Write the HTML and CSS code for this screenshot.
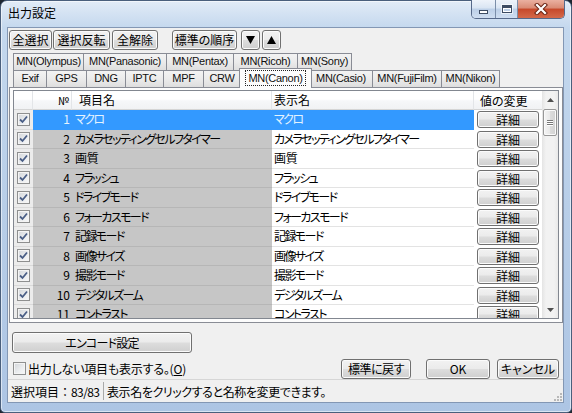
FILE: index.html
```html
<!DOCTYPE html>
<html lang="ja">
<head>
<meta charset="utf-8">
<title>出力設定</title>
<link rel="stylesheet" href="styles.css">
</head>
<body>
<div class="window">
  <div class="titlebar">
    <div class="title">出力設定</div>
    <div class="caption">
      <div class="cap cap-min"><span class="ico-min"></span></div>
      <div class="cap cap-max"><span class="ico-max"></span></div>
      <div class="cap cap-close">
        <svg width="14" height="12" viewBox="0 0 14 12"><path d="M3 2 L11 10 M11 2 L3 10" stroke="#6b2414" stroke-width="4.2" stroke-linecap="square"/><path d="M3 2 L11 10 M11 2 L3 10" stroke="#ffffff" stroke-width="2.2" stroke-linecap="square"/></svg>
      </div>
    </div>
  </div>
  <div class="client">
    <div class="toolbar">
      <button class="btn tb-all">全選択</button>
      <button class="btn tb-inv">選択反転</button>
      <button class="btn tb-none">全解除</button>
      <button class="btn tb-std">標準の順序</button>
      <button class="btn tb-down"><svg width="9" height="8" viewBox="0 0 9 8"><path d="M0 0 H9 L4.5 8 Z" fill="#000"/></svg></button>
      <button class="btn tb-up"><svg width="9" height="8" viewBox="0 0 9 8"><path d="M0 8 H9 L4.5 0 Z" fill="#000"/></svg></button>
    </div>
    <div class="tabs">
      <div class="tabrow">
        <div class="tab first t-olympus">MN(Olympus)</div>
        <div class="tab t-panasonic">MN(Panasonic)</div>
        <div class="tab t-pentax">MN(Pentax)</div>
        <div class="tab t-ricoh">MN(Ricoh)</div>
        <div class="tab t-sony">MN(Sony)</div>
      </div>
      <div class="tabrow">
        <div class="tab first t-exif">Exif</div>
        <div class="tab t-gps">GPS</div>
        <div class="tab t-dng">DNG</div>
        <div class="tab t-iptc">IPTC</div>
        <div class="tab t-mpf">MPF</div>
        <div class="tab t-crw">CRW</div>
        <div class="tab t-canon selected"><span class="focus">MN(Canon)</span></div>
        <div class="tab t-casio">MN(Casio)</div>
        <div class="tab t-fuji">MN(FujiFilm)</div>
        <div class="tab t-nikon">MN(Nikon)</div>
      </div>
    </div>
    <div class="panel">
      <div class="list">
        <div class="list-main">
          <div class="row head">
            <div class="c c-chk"></div>
            <div class="c c-no">№</div>
            <div class="c c-item">項目名</div>
            <div class="c c-disp">表示名</div>
            <div class="c c-act">値の変更</div>
          </div>
          <div class="row sel">
            <div class="c c-chk"><span class="cbox on"><svg width="9" height="9" viewBox="0 0 9 9"><path d="M1 4.5 L3.5 7 L8 1.5" fill="none" stroke="#4a5e86" stroke-width="1.8"/></svg></span></div>
            <div class="c c-no">1</div>
            <div class="c c-item">マクロ</div>
            <div class="c c-disp">マクロ</div>
            <div class="c c-act"><button class="btn detail">詳細</button></div>
          </div>
          <div class="row">
            <div class="c c-chk"><span class="cbox on"><svg width="9" height="9" viewBox="0 0 9 9"><path d="M1 4.5 L3.5 7 L8 1.5" fill="none" stroke="#4a5e86" stroke-width="1.8"/></svg></span></div>
            <div class="c c-no">2</div>
            <div class="c c-item">カメラセッティングセルフタイマー</div>
            <div class="c c-disp">カメラセッティングセルフタイマー</div>
            <div class="c c-act"><button class="btn detail">詳細</button></div>
          </div>
          <div class="row">
            <div class="c c-chk"><span class="cbox on"><svg width="9" height="9" viewBox="0 0 9 9"><path d="M1 4.5 L3.5 7 L8 1.5" fill="none" stroke="#4a5e86" stroke-width="1.8"/></svg></span></div>
            <div class="c c-no">3</div>
            <div class="c c-item kanji">画質</div>
            <div class="c c-disp kanji">画質</div>
            <div class="c c-act"><button class="btn detail">詳細</button></div>
          </div>
          <div class="row">
            <div class="c c-chk"><span class="cbox on"><svg width="9" height="9" viewBox="0 0 9 9"><path d="M1 4.5 L3.5 7 L8 1.5" fill="none" stroke="#4a5e86" stroke-width="1.8"/></svg></span></div>
            <div class="c c-no">4</div>
            <div class="c c-item">フラッシュ</div>
            <div class="c c-disp">フラッシュ</div>
            <div class="c c-act"><button class="btn detail">詳細</button></div>
          </div>
          <div class="row">
            <div class="c c-chk"><span class="cbox on"><svg width="9" height="9" viewBox="0 0 9 9"><path d="M1 4.5 L3.5 7 L8 1.5" fill="none" stroke="#4a5e86" stroke-width="1.8"/></svg></span></div>
            <div class="c c-no">5</div>
            <div class="c c-item">ドライブモード</div>
            <div class="c c-disp">ドライブモード</div>
            <div class="c c-act"><button class="btn detail">詳細</button></div>
          </div>
          <div class="row">
            <div class="c c-chk"><span class="cbox on"><svg width="9" height="9" viewBox="0 0 9 9"><path d="M1 4.5 L3.5 7 L8 1.5" fill="none" stroke="#4a5e86" stroke-width="1.8"/></svg></span></div>
            <div class="c c-no">6</div>
            <div class="c c-item">フォーカスモード</div>
            <div class="c c-disp">フォーカスモード</div>
            <div class="c c-act"><button class="btn detail">詳細</button></div>
          </div>
          <div class="row">
            <div class="c c-chk"><span class="cbox on"><svg width="9" height="9" viewBox="0 0 9 9"><path d="M1 4.5 L3.5 7 L8 1.5" fill="none" stroke="#4a5e86" stroke-width="1.8"/></svg></span></div>
            <div class="c c-no">7</div>
            <div class="c c-item">記録モード</div>
            <div class="c c-disp">記録モード</div>
            <div class="c c-act"><button class="btn detail">詳細</button></div>
          </div>
          <div class="row">
            <div class="c c-chk"><span class="cbox on"><svg width="9" height="9" viewBox="0 0 9 9"><path d="M1 4.5 L3.5 7 L8 1.5" fill="none" stroke="#4a5e86" stroke-width="1.8"/></svg></span></div>
            <div class="c c-no">8</div>
            <div class="c c-item">画像サイズ</div>
            <div class="c c-disp">画像サイズ</div>
            <div class="c c-act"><button class="btn detail">詳細</button></div>
          </div>
          <div class="row">
            <div class="c c-chk"><span class="cbox on"><svg width="9" height="9" viewBox="0 0 9 9"><path d="M1 4.5 L3.5 7 L8 1.5" fill="none" stroke="#4a5e86" stroke-width="1.8"/></svg></span></div>
            <div class="c c-no">9</div>
            <div class="c c-item">撮影モード</div>
            <div class="c c-disp">撮影モード</div>
            <div class="c c-act"><button class="btn detail">詳細</button></div>
          </div>
          <div class="row">
            <div class="c c-chk"><span class="cbox on"><svg width="9" height="9" viewBox="0 0 9 9"><path d="M1 4.5 L3.5 7 L8 1.5" fill="none" stroke="#4a5e86" stroke-width="1.8"/></svg></span></div>
            <div class="c c-no">10</div>
            <div class="c c-item">デジタルズーム</div>
            <div class="c c-disp">デジタルズーム</div>
            <div class="c c-act"><button class="btn detail">詳細</button></div>
          </div>
          <div class="row">
            <div class="c c-chk"><span class="cbox on"><svg width="9" height="9" viewBox="0 0 9 9"><path d="M1 4.5 L3.5 7 L8 1.5" fill="none" stroke="#4a5e86" stroke-width="1.8"/></svg></span></div>
            <div class="c c-no">11</div>
            <div class="c c-item">コントラスト</div>
            <div class="c c-disp">コントラスト</div>
            <div class="c c-act"><button class="btn detail">詳細</button></div>
          </div>
        </div>
        <div class="vscroll">
          <div class="sb-btn"><svg width="7" height="4" viewBox="0 0 7 4"><path d="M0 4 H7 L3.5 0 Z" fill="#505050"/></svg></div>
          <div class="sb-track">
            <div class="sb-thumb"><span class="grip-line"></span><span class="grip-line"></span><span class="grip-line"></span></div>
          </div>
          <div class="sb-btn"><svg width="7" height="4" viewBox="0 0 7 4"><path d="M0 0 H7 L3.5 4 Z" fill="#505050"/></svg></div>
        </div>
      </div>
    </div>
    <button class="btn encode">エンコード設定</button>
    <div class="bottom">
      <label class="chk-label"><span class="cbox"></span><span>出力しない項目も表示する。(<u>O</u>)</span></label>
      <div class="actions">
        <button class="btn b-reset">標準に戻す</button>
        <button class="btn b-ok">OK</button>
        <button class="btn b-cancel">キャンセル</button>
      </div>
    </div>
    <div class="status">
      <div class="st-count">選択項目<span class="colon">：</span><span class="num">83/83</span></div>
      <div class="st-msg">表示名をクリックすると名称を変更できます。</div>
      <svg class="grip" width="9" height="9" viewBox="0 0 9 9">
        <rect x="7" y="1" width="2" height="2" fill="#b8b8b8"/>
        <rect x="4" y="4" width="2" height="2" fill="#b8b8b8"/>
        <rect x="7" y="4" width="2" height="2" fill="#b8b8b8"/>
        <rect x="1" y="7" width="2" height="2" fill="#b8b8b8"/>
        <rect x="4" y="7" width="2" height="2" fill="#b8b8b8"/>
        <rect x="7" y="7" width="2" height="2" fill="#b8b8b8"/>
      </svg>
    </div>
  </div>
</div>
</body>
</html>
```

FILE: styles.css
```css
* { box-sizing: border-box; }
html, body { margin: 0; padding: 0; }
body {
  width: 572px;
  height: 413px;
  overflow: hidden;
  background: #1e2630;
  font-family: "Noto Sans CJK JP", "Noto Sans", sans-serif;
  font-size: 12px;
  color: #000;
  font-feature-settings: "palt" 1;
}

.window {
  width: 572px;
  height: 413px;
  border: 1px solid #4a5f7c;
  border-radius: 7px 7px 5px 5px;
  background: linear-gradient(180deg, #e2ecf7 0, #d2e1f2 14px, #c4d8ee 27px, #b8cee8 50%, #adc5e4 100%);
  box-shadow: inset 0 0 0 1px rgba(255, 255, 255, 0.55);
  display: flex;
  flex-direction: column;
  padding: 0 7px 9px 6px;
}

/* title bar */
.titlebar {
  height: 26px;
  flex: none;
  display: flex;
  align-items: flex-start;
}
.title {
  margin-top: 4px;
  margin-left: 1px;
  line-height: 16px;
  font-size: 12px;
}
.caption {
  margin-left: auto;
  margin-right: -1px;
  margin-top: -1px;
  height: 19px;
  display: flex;
  border: 1px solid #56698a;
  border-top: 0;
  border-radius: 0 0 5px 5px;
  overflow: hidden;
}
.cap {
  height: 100%;
  display: flex;
  align-items: center;
  justify-content: center;
}
.cap-min, .cap-max {
  background: linear-gradient(180deg, #eef3fa 0%, #d9e5f3 45%, #bccfe7 50%, #cfdef1 100%);
  border-right: 1px solid #7b8ea9;
}
.cap-min { width: 24px; }
.cap-max { width: 22px; }
.cap-close {
  width: 46px;
  background: linear-gradient(180deg, #eab0a0 0%, #d98a74 45%, #c6482a 50%, #d4694a 100%);
}
.ico-min {
  width: 9px;
  height: 4px;
  margin-top: 6px;
  background: #fff;
  border: 1px solid #3d4c63;
}
.ico-max {
  width: 10px;
  height: 8px;
  border: 1px solid #3d4c63;
  border-top-width: 3px;
  background: transparent;
  box-shadow: inset 0 0 0 1px #fff, 0 0 0 1px rgba(255,255,255,.6);
}

/* client area */
.client {
  flex: 1;
  background: #f0f0f0;
  border: 1px solid #8397b4;
  display: flex;
  flex-direction: column;
}

.btn {
  font: inherit;
  font-feature-settings: "palt" 1;
  color: #000;
  padding: 0;
  margin: 0;
  border: 1px solid #707070;
  border-radius: 3px;
  background: linear-gradient(180deg, #f2f2f2 0%, #ebebeb 48%, #dddddd 52%, #cfcfcf 100%);
  box-shadow: inset 0 0 0 1px #fbfbfb;
  display: flex;
  align-items: center;
  justify-content: center;
  line-height: 16px;
  white-space: nowrap;
}

/* toolbar */
.toolbar {
  display: flex;
  height: 20px;
  margin-top: 2px;
  flex: none;
}
.toolbar .btn { height: 20px; }
.tb-all { margin-left: 1px; width: 43px; }
.tb-inv { margin-left: 1px; width: 57px; }
.tb-none { margin-left: 2px; width: 46px; }
.tb-std { margin-left: 14px; width: 65px; }
.tb-down { margin-left: 4px; width: 19px; }
.tb-up { margin-left: 2px; width: 19px; }

/* tabs */
.tabs {
  margin-top: 3px;
  padding-left: 5px;
  height: 34px;
  flex: none;
  display: flex;
  flex-direction: column;
}
.tabrow {
  display: flex;
  height: 17px;
}
.tab {
  height: 17px;
  border: 1px solid #898c95;
  border-left: 0;
  border-bottom: 0;
  background: linear-gradient(180deg, #f3f3f3 0%, #ebebeb 50%, #dedede 100%);
  text-align: center;
  font-family: "Liberation Sans", "Noto Sans CJK JP", sans-serif;
  font-size: 11px;
  letter-spacing: -0.3px;
  line-height: 15px;
  white-space: nowrap;
  overflow: visible;
  color: #111;
}
.tab.first { border-left: 1px solid #898c95; }
.tab.selected {
  position: relative;
  z-index: 2;
  top: -2px;
  height: 20px;
  margin: 0 -2px;
  border-left: 1px solid #898c95;
  background: #fcfcfc;
  padding-top: 2px;
}
.focus {
  display: inline-block;
  outline: 1px dotted #222;
  outline-offset: 0;
  padding: 0 2px;
  line-height: 14px;
}
.t-olympus { width: 71px; }
.t-panasonic { width: 83px; }
.t-pentax { width: 67px; }
.t-ricoh { width: 64px; }
.t-sony { width: 54px; }
.t-exif { width: 34px; }
.t-gps { width: 40px; }
.t-dng { width: 39px; }
.t-iptc { width: 38px; }
.t-mpf { width: 40px; }
.t-crw { width: 37px; }
.t-canon { width: 73px; }
.t-casio { width: 63px; }
.t-fuji { width: 69px; }
.t-nikon { width: 58px; }

/* panel */
.panel {
  flex: none;
  height: 236px;
  margin-left: 1px;
  border: 1px solid #898c95;
  background: #fcfcfc;
  padding: 2px 3px 3px 3px;
}
.list {
  height: 229px;
  border: 1px solid #828790;
  background: #fff;
  display: flex;
  overflow: hidden;
}
.list-main {
  width: 528px;
  overflow: hidden;
}
.row {
  display: grid;
  grid-template-columns: 19px 39px 200px 202px 68px;
  height: 19.5px;
}
.c {
  white-space: nowrap;
  overflow: hidden;
  line-height: 18px;
  border-bottom: 1px solid #e3e3e3;
}
.row.head {
  height: 19px;
}
.head .c {
  background: linear-gradient(180deg, #ffffff 0%, #ffffff 45%, #f6f7f9 55%, #f1f2f4 100%);
  border-bottom: 1px solid #d5d5d5;
  border-right: 1px solid #e3e5e8;
  line-height: 18px;
  letter-spacing: 0;
}
.head .c-no { padding-left: 6px; font-size: 11px; }
.head .c-item { padding-left: 7px; }
.head .c-disp { padding-left: 2px; }
.head .c-act { padding-left: 6px; border-right: 0; }

.c-chk {
  background: #ececec;
  border-bottom-color: #dadada;
  display: flex;
  align-items: center;
  justify-content: center;
}
.c-no {
  background: #c6c6c6;
  border-bottom-color: #b6b6b6;
  text-align: right;
  padding-right: 2px;
}
.c-item {
  background: #c6c6c6;
  border-bottom-color: #b6b6b6;
  padding-left: 3px;
  letter-spacing: -1.6px;
}
.c-disp {
  padding-left: 2px;
  letter-spacing: -1.6px;
}
.c-item.kanji, .c-disp.kanji { letter-spacing: -0.3px; }
.c-act {
  padding: 1px 3px 1px 3px;
  border-bottom: 0;
}
.sel .c-no, .sel .c-item, .sel .c-disp {
  background: #3399ff;
  color: #e4f3ff;
  border-bottom-color: #3399ff;
}
.btn.detail {
  width: 62px;
  height: 17px;
  line-height: 15px;
}

.cbox {
  width: 13px;
  height: 13px;
  flex: none;
  border: 1px solid #8e8f8f;
  background: linear-gradient(135deg, #d2d5d9 0%, #eceef0 60%, #f8f8f8 100%);
  box-shadow: inset 0 0 0 1px #f4f4f4;
  display: flex;
  align-items: center;
  justify-content: center;
}

/* scrollbar */
.vscroll {
  width: 16px;
  flex: none;
  display: flex;
  flex-direction: column;
  background: linear-gradient(90deg, #e4e4e4 0%, #f2f2f2 25%, #f2f2f2 75%, #e9e9e9 100%);
}
.sb-btn {
  height: 17px;
  flex: none;
  display: flex;
  align-items: center;
  justify-content: center;
}
.sb-track {
  flex: 1;
  padding-top: 1px;
}
.sb-thumb {
  height: 27px;
  margin: 0 1px;
  border: 1px solid #979797;
  border-radius: 2px;
  background: linear-gradient(90deg, #f4f4f4 0%, #e9e9e9 50%, #dcdcdc 51%, #d2d2d2 100%);
  box-shadow: inset 0 0 0 1px #fafafa;
  display: flex;
  flex-direction: column;
  align-items: center;
  justify-content: center;
  gap: 1px;
}
.grip-line {
  width: 6px;
  height: 1px;
  background: #777;
  box-shadow: 0 1px 0 #fff;
}

/* bottom controls */
.encode {
  flex: none;
  margin-top: 9px;
  margin-left: 4px;
  width: 180px;
  height: 21px;
  letter-spacing: -0.8px;
}
.bottom {
  flex: none;
  margin-top: 5px;
  height: 21px;
  display: flex;
  align-items: center;
}
.chk-label {
  margin-left: 5px;
  display: flex;
  align-items: center;
  gap: 2px;
  line-height: 16px;
  letter-spacing: -0.2px;
}
.chk-label u { text-decoration: underline; }
.actions {
  margin-left: auto;
  margin-right: 4px;
  display: flex;
  align-items: flex-end;
  height: 21px;
}
.actions .btn { height: 20px; }
.b-reset { width: 70px; letter-spacing: -0.5px; }
.b-ok { width: 64px; margin-left: 15px; }
.b-cancel { width: 62px; margin-left: 7px; }

/* status bar */
.status {
  flex: 1;
  display: flex;
  align-items: center;
  border-top: 1px solid #d6d6d6;
  background: #f0f0f0;
  white-space: nowrap;
}
.st-count {
  width: 96px;
  flex: none;
  padding-left: 3px;
  align-self: stretch;
  display: flex;
  align-items: center;
  border-right: 1px solid #a9a9a9;
  margin: 2px 0;
  white-space: nowrap;
  overflow: hidden;
}
.colon { font-feature-settings: normal; }
.num { letter-spacing: -0.6px; }
.st-msg {
  padding-left: 3px;
  letter-spacing: -0.4px;
}
.grip {
  margin-left: auto;
  margin-right: 1px;
  align-self: flex-end;
  margin-bottom: 1px;
}
```
